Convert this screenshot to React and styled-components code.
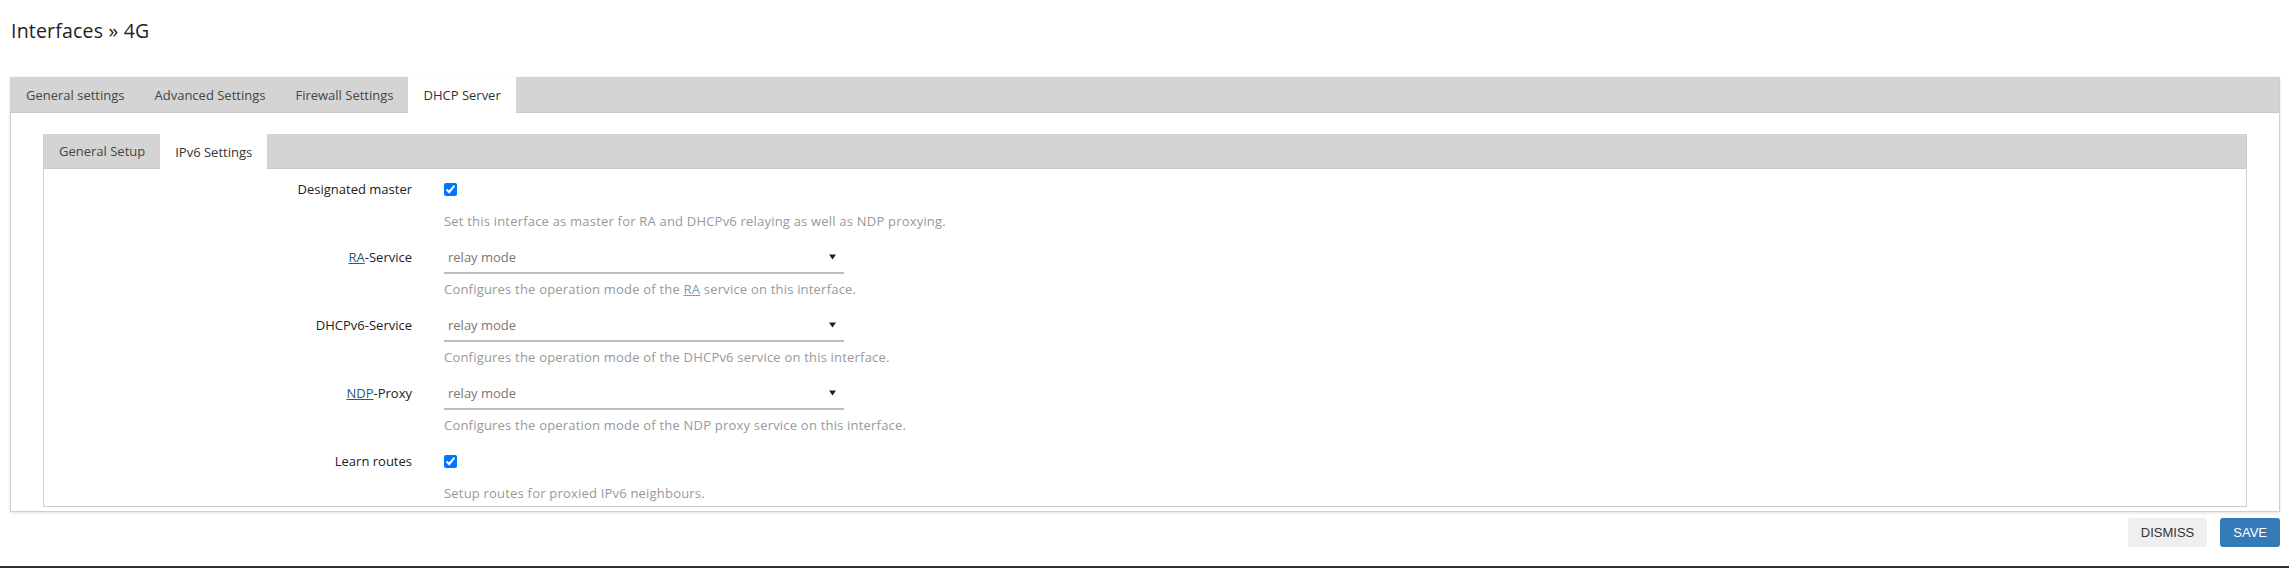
import React from "react";
import styled, { createGlobalStyle } from "styled-components";

const GlobalStyle = createGlobalStyle`
  html, body {
    margin: 0;
    padding: 0;
    background: #fff;
  }
  body {
    font-family: "Open Sans", "Noto Sans", sans-serif;
    font-size: 13px;
    color: #333;
  }
`;

const Page = styled.div`
  padding: 18px 9px 0 10px;
  height: 568px;
  box-sizing: border-box;
  overflow: hidden;
  display: flex;
  flex-direction: column;
`;

const Title = styled.h2`
  margin: 0 0 33px 1px;
  font-size: 19.5px;
  font-weight: 400;
  line-height: 26px;
  letter-spacing: 0.2px;
  color: #222;
`;

const Section = styled.div`
  border: 1px solid #cfcfcf;
  border-top: none;
  box-shadow: 0 1px 3px rgba(0, 0, 0, 0.12);
`;

const TabBar = styled.div`
  display: flex;
  height: ${(p) => p.$height}px;
  background: #d4d4d4;
  border-bottom: 1px solid #c8c8c8;
  box-sizing: border-box;
`;

const Tab = styled.div`
  display: flex;
  align-items: center;
  padding: 0 15px;
  margin-bottom: ${(p) => (p.$active ? "-1px" : "0")};
  background: ${(p) => (p.$active ? "#fff" : "transparent")};
  color: ${(p) => (p.$active ? "#333" : "#444")};
  font-size: 13px;
  white-space: nowrap;
`;

const TabBody = styled.div`
  padding: 21px 32px 4px 32px;
`;

const SubSection = styled.div`
  border: 1px solid #cfcfcf;
  border-top: none;
`;

const Form = styled.div`
  padding: 4px 0 4px;
  display: flex;
  flex-direction: column;
  gap: 11px;
`;

const Row = styled.div`
  display: grid;
  grid-template-columns: 368px 1fr;
  column-gap: 32px;
`;

const Label = styled.div`
  text-align: right;
  line-height: 33px;
  color: #222;
`;

const Abbr = styled.span`
  color: #1f5c80;
  text-decoration: underline;
`;

const DescAbbr = styled.span`
  color: #6aa3c4;
  text-decoration: underline;
`;

const Field = styled.div`
  display: flex;
  flex-direction: column;
`;

const Control = styled.div`
  height: 33px;
  display: flex;
  align-items: center;
`;

const Check = styled.input`
  width: 13px;
  height: 13px;
  margin: 0;
  accent-color: #0075ff;
`;

const Select = styled.div`
  width: 400px;
  height: 33px;
  box-sizing: border-box;
  border-bottom: 2px solid #bdbdbd;
  display: flex;
  align-items: center;
  justify-content: space-between;
  padding: 0 8px 0 4px;
  color: #777;
`;

const Desc = styled.div`
  margin-top: 6px;
  line-height: 18px;
  letter-spacing: 0.2px;
  color: #999;
`;

const Actions = styled.div`
  display: flex;
  justify-content: flex-end;
  gap: 13px;
  margin-top: 6px;
`;

const Button = styled.button`
  height: 29px;
  padding: 0 13px;
  border: none;
  border-radius: 3px;
  font-family: "Liberation Sans", Arial, sans-serif;
  font-size: 13px;
  background: ${(p) => (p.$primary ? "#337ab7" : "#efefef")};
  color: ${(p) => (p.$primary ? "#fff" : "#333")};
  cursor: pointer;
`;

const Footer = styled.div`
  margin: auto -9px 0 -10px;
  height: 2px;
  background: #2e2e2e;
`;

const outerTabs = [
  { id: "general", title: "General settings" },
  { id: "advanced", title: "Advanced Settings" },
  { id: "firewall", title: "Firewall Settings" },
  { id: "dhcp", title: "DHCP Server", active: true },
];

const innerTabs = [
  { id: "setup", title: "General Setup" },
  { id: "ipv6", title: "IPv6 Settings", active: true },
];

const fields = [
  {
    id: "master",
    label: "Designated master",
    type: "checkbox",
    desc: "Set this interface as master for RA and DHCPv6 relaying as well as NDP proxying.",
  },
  {
    id: "ra",
    label: (
      <>
        <Abbr>RA</Abbr>-Service
      </>
    ),
    type: "select",
    desc: (
      <>
        Configures the operation mode of the <DescAbbr>RA</DescAbbr> service on this interface.
      </>
    ),
  },
  {
    id: "dhcpv6",
    label: "DHCPv6-Service",
    type: "select",
    desc: "Configures the operation mode of the DHCPv6 service on this interface.",
  },
  {
    id: "ndp",
    label: (
      <>
        <Abbr>NDP</Abbr>-Proxy
      </>
    ),
    type: "select",
    desc: "Configures the operation mode of the NDP proxy service on this interface.",
  },
  {
    id: "learn",
    label: "Learn routes",
    type: "checkbox",
    desc: "Setup routes for proxied IPv6 neighbours.",
  },
];

function Arrow() {
  return (
    <svg width="7" height="6" viewBox="0 0 7 6">
      <path d="M0 0.5 L7 0.5 L3.5 5.5 Z" fill="#222" />
    </svg>
  );
}

export default function App() {
  return (
    <Page>
      <GlobalStyle />
      <Title>Interfaces » 4G</Title>
      <Section>
        <TabBar $height={36}>
          {outerTabs.map((t) => (
            <Tab key={t.id} $active={t.active}>
              {t.title}
            </Tab>
          ))}
        </TabBar>
        <TabBody>
          <SubSection>
            <TabBar $height={35}>
              {innerTabs.map((t) => (
                <Tab key={t.id} $active={t.active}>
                  {t.title}
                </Tab>
              ))}
            </TabBar>
            <Form>
              {fields.map((f) => (
                <Row key={f.id}>
                  <Label>{f.label}</Label>
                  <Field>
                    <Control>
                      {f.type === "checkbox" ? (
                        <Check type="checkbox" checked readOnly />
                      ) : (
                        <Select>
                          <span>relay mode</span>
                          <Arrow />
                        </Select>
                      )}
                    </Control>
                    <Desc>{f.desc}</Desc>
                  </Field>
                </Row>
              ))}
            </Form>
          </SubSection>
        </TabBody>
      </Section>
      <Actions>
        <Button>DISMISS</Button>
        <Button $primary>SAVE</Button>
      </Actions>
      <Footer />
    </Page>
  );
}
